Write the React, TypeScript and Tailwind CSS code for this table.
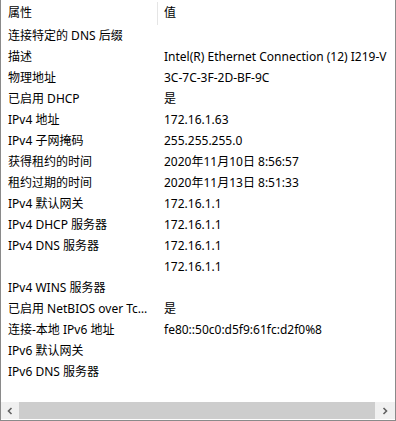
import React from "react";

const rows: [string, string][] = [
  ["连接特定的 DNS 后缀", ""],
  ["描述", "Intel(R) Ethernet Connection (12) I219-V"],
  ["物理地址", "3C-7C-3F-2D-BF-9C"],
  ["已启用 DHCP", "是"],
  ["IPv4 地址", "172.16.1.63"],
  ["IPv4 子网掩码", "255.255.255.0"],
  ["获得租约的时间", "2020年11月10日 8:56:57"],
  ["租约过期的时间", "2020年11月13日 8:51:33"],
  ["IPv4 默认网关", "172.16.1.1"],
  ["IPv4 DHCP 服务器", "172.16.1.1"],
  ["IPv4 DNS 服务器", "172.16.1.1"],
  ["", "172.16.1.1"],
  ["IPv4 WINS 服务器", ""],
  ["已启用 NetBIOS over Tcpip", "是"],
  ["连接-本地 IPv6 地址", "fe80::50c0:d5f9:61fc:d2f0%8"],
  ["IPv6 默认网关", ""],
  ["IPv6 DNS 服务器", ""],
];

export default function App() {
  return (
    <div
      className="w-[396px] h-[421px] bg-white border-l border-r border-b border-[#8a8a8a] flex flex-col text-[12px] text-black overflow-hidden"
      style={{ fontFamily: '"Noto Sans", "Noto Sans CJK SC", sans-serif' }}
    >
      <div className="flex h-[25px] items-center shrink-0">
        <div className="w-[156px] pl-[7px] leading-[18px]">属性</div>
        <div className="w-px h-[23px] bg-[#e5e5e5] self-end"></div>
        <div className="pl-[6px] leading-[18px]">值</div>
      </div>
      <div className="flex flex-col">
        {rows.map(([k, v], i) => (
          <div key={i} className="flex h-[21px] items-center">
            <div className="w-[156px] pl-[7px] pr-[3px] whitespace-nowrap overflow-hidden text-ellipsis leading-[18px]">
              {k}
            </div>
            <div className="pl-[7px] whitespace-nowrap leading-[18px]">{v}</div>
          </div>
        ))}
      </div>
      <div className="flex-1"></div>
      <div className="h-[17px] flex bg-[#f0f0f0] shrink-0 mb-px">
        <div className="w-[18px] flex items-center justify-center">
          <svg width="8" height="8" viewBox="0 0 8 8">
            <path d="M5.5 1 L2.5 4 L5.5 7" stroke="#606060" strokeWidth="1.6" fill="none" />
          </svg>
        </div>
        <div className="flex-1 bg-[#cdcdcd]"></div>
        <div className="w-[20px] flex items-center justify-center">
          <svg width="8" height="8" viewBox="0 0 8 8">
            <path d="M2.5 1 L5.5 4 L2.5 7" stroke="#606060" strokeWidth="1.6" fill="none" />
          </svg>
        </div>
      </div>
    </div>
  );
}
